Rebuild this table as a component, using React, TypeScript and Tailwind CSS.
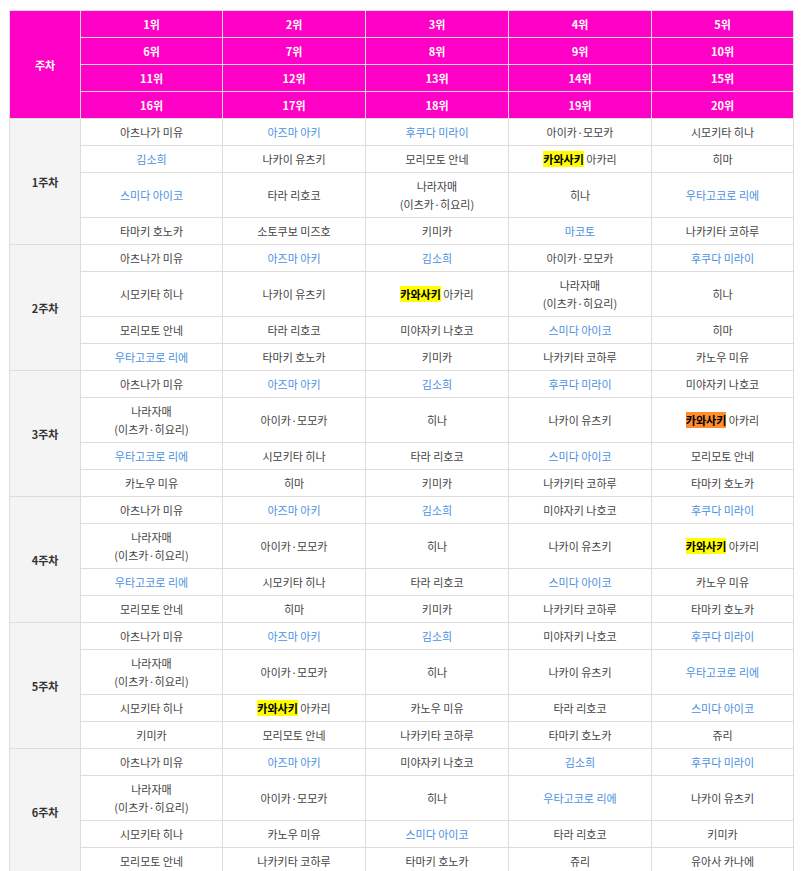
import React from "react";

type Cell = { t: string; b?: boolean; h?: "y" | "o"; two?: boolean };

const D = (t: string): Cell => ({ t });
const B = (t: string): Cell => ({ t, b: true });
const HY: Cell = { t: "아카리", h: "y" };
const HO: Cell = { t: "아카리", h: "o" };
const NR: Cell = { t: "나라자매", two: true };

const weeks: Cell[][][] = [
  [
    [D("아츠나가 미유"), B("아즈마 아키"), B("후쿠다 미라이"), D("아이카·모모카"), D("시모키타 히나")],
    [B("김소희"), D("나카이 유츠키"), D("모리모토 안네"), HY, D("히마")],
    [B("스미다 아이코"), D("타라 리호코"), NR, D("히나"), B("우타고코로 리에")],
    [D("타마키 호노카"), D("소토쿠보 미즈호"), D("키미카"), B("마코토"), D("나카키타 코하루")],
  ],
  [
    [D("아츠나가 미유"), B("아즈마 아키"), B("김소희"), D("아이카·모모카"), B("후쿠다 미라이")],
    [D("시모키타 히나"), D("나카이 유츠키"), HY, NR, D("히나")],
    [D("모리모토 안네"), D("타라 리호코"), D("미야자키 나호코"), B("스미다 아이코"), D("히마")],
    [B("우타고코로 리에"), D("타마키 호노카"), D("키미카"), D("나카키타 코하루"), D("카노우 미유")],
  ],
  [
    [D("아츠나가 미유"), B("아즈마 아키"), B("김소희"), B("후쿠다 미라이"), D("미야자키 나호코")],
    [NR, D("아이카·모모카"), D("히나"), D("나카이 유츠키"), HO],
    [B("우타고코로 리에"), D("시모키타 히나"), D("타라 리호코"), B("스미다 아이코"), D("모리모토 안네")],
    [D("카노우 미유"), D("히마"), D("키미카"), D("나카키타 코하루"), D("타마키 호노카")],
  ],
  [
    [D("아츠나가 미유"), B("아즈마 아키"), B("김소희"), D("미야자키 나호코"), B("후쿠다 미라이")],
    [NR, D("아이카·모모카"), D("히나"), D("나카이 유츠키"), HY],
    [B("우타고코로 리에"), D("시모키타 히나"), D("타라 리호코"), B("스미다 아이코"), D("카노우 미유")],
    [D("모리모토 안네"), D("히마"), D("키미카"), D("나카키타 코하루"), D("타마키 호노카")],
  ],
  [
    [D("아츠나가 미유"), B("아즈마 아키"), B("김소희"), D("미야자키 나호코"), B("후쿠다 미라이")],
    [NR, D("아이카·모모카"), D("히나"), D("나카이 유츠키"), B("우타고코로 리에")],
    [D("시모키타 히나"), HY, D("카노우 미유"), D("타라 리호코"), B("스미다 아이코")],
    [D("키미카"), D("모리모토 안네"), D("나카키타 코하루"), D("타마키 호노카"), D("쥬리")],
  ],
  [
    [D("아츠나가 미유"), B("아즈마 아키"), D("미야자키 나호코"), B("김소희"), B("후쿠다 미라이")],
    [NR, D("아이카·모모카"), D("히나"), B("우타고코로 리에"), D("나카이 유츠키")],
    [D("시모키타 히나"), D("카노우 미유"), B("스미다 아이코"), D("타라 리호코"), D("키미카")],
    [D("모리모토 안네"), D("나카키타 코하루"), D("타마키 호노카"), D("쥬리"), D("유아사 카나에")],
  ],
];

function CellContent({ c }: { c: Cell }) {
  if (c.h) {
    return (
      <>
        <span
          className={
            c.h === "y"
              ? "bg-[#ffff00] font-bold text-black"
              : "bg-[#ff8c2e] font-bold text-black"
          }
        >
          카와사키
        </span>{" "}
        {c.t}
      </>
    );
  }
  if (c.two) {
    return (
      <>
        나라자매
        <br />
        (이츠카·히요리)
      </>
    );
  }
  return <>{c.t}</>;
}

export default function App() {
  const headRows = [
    ["1위", "2위", "3위", "4위", "5위"],
    ["6위", "7위", "8위", "9위", "10위"],
    ["11위", "12위", "13위", "14위", "15위"],
    ["16위", "17위", "18위", "19위", "20위"],
  ];
  return (
    <div
      className="bg-white pt-[10px] pl-[9px] pb-4"
      style={{ fontFamily: '"Noto Sans CJK KR", "Noto Sans", sans-serif' }}
    >
      <table className="w-[784px] table-fixed border-collapse text-[11px] leading-[18px] text-center">
        <colgroup>
          <col className="w-[71px]" />
          <col className="w-[142px]" />
          <col className="w-[143px]" />
          <col className="w-[143px]" />
          <col className="w-[143px]" />
          <col className="w-[142px]" />
        </colgroup>
        <thead>
          {headRows.map((r, i) => (
            <tr key={i} className="h-[27px]">
              {i === 0 && (
                <th
                  rowSpan={4}
                  className="border border-[#dddddd] bg-[#ff00c6] font-bold text-white"
                >
                  주차
                </th>
              )}
              {r.map((h) => (
                <th
                  key={h}
                  className="border border-[#dddddd] bg-[#ff00c6] py-1 font-bold text-white"
                >
                  {h}
                </th>
              ))}
            </tr>
          ))}
        </thead>
        <tbody>
          {weeks.map((w, wi) =>
            w.map((row, ri) => (
              <tr key={wi + "-" + ri}>
                {ri === 0 && (
                  <td
                    rowSpan={4}
                    className="border border-[#dddddd] bg-[#f4f4f4] font-bold text-[#333]"
                  >
                    {wi + 1}주차
                  </td>
                )}
                {row.map((c, ci) => (
                  <td
                    key={ci}
                    className={
                      "border border-[#dddddd] py-1 " +
                      (c.b ? "text-[#4a90e2]" : "text-[#444]")
                    }
                  >
                    <CellContent c={c} />
                  </td>
                ))}
              </tr>
            ))
          )}
        </tbody>
      </table>
    </div>
  );
}
